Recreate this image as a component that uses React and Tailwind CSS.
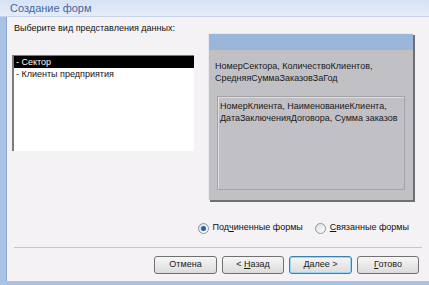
import React from "react";

const font = { fontFamily: '"Liberation Sans", Arial, sans-serif' };

function Radio({ checked, label, underline, rest }) {
  return (
    <label className="flex items-center gap-[4px]">
      <span className="w-[11px] h-[11px] rounded-full border border-[#8c94a6] bg-gradient-to-br from-[#d8dce4] to-white flex items-center justify-center">
        {checked && <span className="w-[5px] h-[5px] rounded-full bg-[#2a5fa8]" />}
      </span>
      <span>
        {label}
        <span className="underline">{underline}</span>
        {rest}
      </span>
    </label>
  );
}

function Btn({ children, focused, w }) {
  return (
    <button
      className={`h-[18px] rounded-[3px] border bg-gradient-to-b from-[#f6f6f6] to-[#dcdcdc] text-[#1b1b1b] ${w} ${
        focused ? "border-[#3c7fb1] shadow-[inset_0_0_0_1px_#9fd5f5]" : "border-[#707070]"
      }`}
    >
      {children}
    </button>
  );
}

export default function App() {
  return (
    <div className="w-[429px] h-[285px] overflow-hidden bg-[#a9c3e6] flex flex-col text-[9px] text-[#111] whitespace-nowrap" style={font}>
      {/* title bar */}
      <div className="h-[17px] flex items-center pl-[10px] bg-gradient-to-b from-[#d6e3f5] to-[#e4ecf8] text-[#4668a0] text-[11px] border-b border-[#c5d4ea]">
        Создание форм
      </div>
      <div className="flex-1 flex pl-[6px] pb-[4px] min-h-0">
        <div className="w-[423px] shrink-0 bg-[#f5f2f5] border-l border-[#8ea6c8] flex flex-col">
          <div className="flex-1 flex pl-[5px] pt-[4px]">
            {/* left column */}
            <div className="w-[196px] shrink-0 flex flex-col">
              <div className="h-[14px] leading-[14px] pl-[2px]">Выберите вид представления данных:</div>
              <div className="mt-[20px] w-[182px] h-[96px] bg-white border-l-2 border-t border-[#7a7a80]">
                <div className="bg-black text-white h-[12px] leading-[12px] pl-[2px]">- Сектор</div>
                <div className="h-[12px] leading-[12px] pl-[2px]">- Клиенты предприятия</div>
              </div>
            </div>
            {/* preview */}
            <div className="mt-[12px] w-[205px] h-[167px] shrink-0 bg-[#c1c0c5] border-t border-l border-[#e8e8ec] shadow-[2px_2px_0_#6e6e74] flex flex-col">
              <div className="h-[16px] bg-[#9ab6d8]" />
              <div className="px-[6px] pt-[10px] leading-[12px] text-[#1a1a1a]">
                НомерСектора, КоличествоКлиентов,
                <br />
                СредняяСуммаЗаказовЗаГод
              </div>
              <div className="mx-[8px] mt-[12px] mb-[10px] flex-1 border border-[#a4a3a8] shadow-[inset_1px_1px_0_#dcdce0] px-[2px] pt-[3px] leading-[12px] text-[#1a1a1a]">
                НомерКлиента, НаименованиеКлиента,
                <br />
                ДатаЗаключенияДоговора, Сумма заказов
              </div>
            </div>
          </div>
          {/* radios */}
          <div className="h-[22px] flex items-center justify-end gap-[12px] pr-[20px]">
            <Radio checked label="Под" underline="ч" rest="иненные формы" />
            <Radio label="" underline="С" rest="вязанные формы" />
          </div>
          {/* separator */}
          <div className="mx-[7px] mt-[8px] border-t border-[#c8c6cc]" />
          {/* buttons */}
          <div className="h-[33px] flex items-start pt-[8px] justify-end gap-[5px] pr-[10px]">
            <Btn w="w-[63px]">Отмена</Btn>
            <Btn w="w-[62px]">&lt; <span className="underline">Н</span>азад</Btn>
            <Btn focused w="w-[63px]"><span className="underline">Д</span>алее &gt;</Btn>
            <Btn w="w-[62px]"><span className="underline">Г</span>отово</Btn>
          </div>
        </div>
      </div>
    </div>
  );
}
